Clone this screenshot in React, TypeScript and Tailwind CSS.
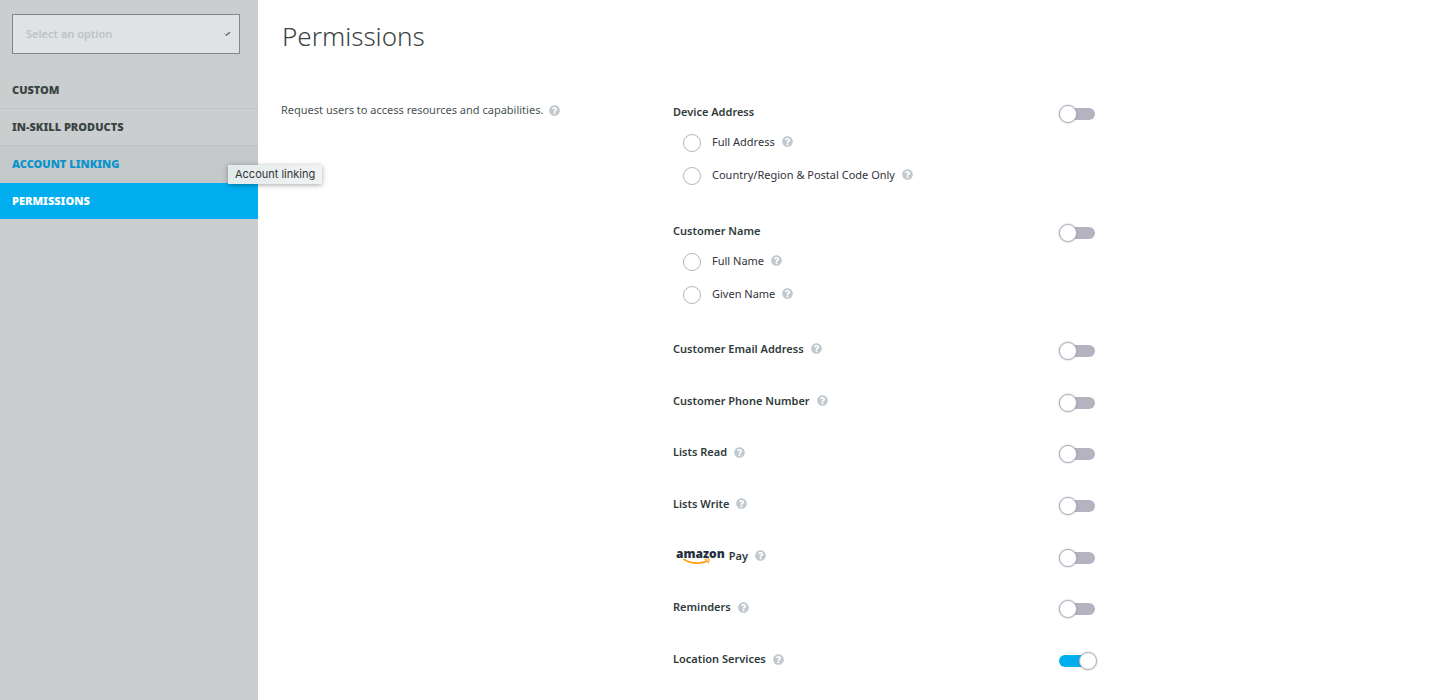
import React from "react";
import { FaQuestionCircle } from "react-icons/fa";

function Help({ topic }: { topic: string }) {
  return (
    <button type="button" aria-label={`Help: ${topic}`} className="shrink-0 text-[#c1c8ce]">
      <FaQuestionCircle className="size-[11px]" />
    </button>
  );
}

function Toggle({ id, on = false }: { id: string; on?: boolean }) {
  return (
    <span className="relative flex h-5 w-[38px] shrink-0 items-center">
      <input
        id={id}
        type="checkbox"
        role="switch"
        defaultChecked={on}
        className="peer h-3 w-9 cursor-pointer appearance-none rounded-full bg-[#b5b3c0] checked:bg-[#00aeef]"
      />
      <span className="pointer-events-none absolute left-0 size-[18px] rounded-full border border-[#b5b3c0] bg-white shadow-[0_0_2px_rgba(120,118,140,0.6)] peer-checked:left-5" />
    </span>
  );
}

function AmazonLogo() {
  return (
    <span className="relative ml-[3px] pb-1 font-['Open_Sans',sans-serif] text-[12px] leading-3 font-extrabold text-[#232f3e]">
      amazon
      <svg
        aria-hidden="true"
        viewBox="0 0 28 9"
        className="absolute top-[9px] left-[7px] h-[9px] w-7"
        fill="none"
        stroke="#ff9900"
      >
        <path d="M1 2.4C8 7.2 18 7.2 24 4" strokeWidth="1.7" strokeLinecap="round" />
        <path d="M22 2.3c1.8-.6 3.7-.7 4.1-.2.4.6-.2 2.4-1.1 3.8" strokeWidth="1.1" strokeLinecap="round" />
      </svg>
    </span>
  );
}

function PermissionHead({
  id,
  label,
  help = true,
  on,
  logo,
}: {
  id: string;
  label: string;
  help?: boolean;
  on?: boolean;
  logo?: boolean;
}) {
  return (
    <div className="flex h-6 items-center justify-between">
      <div className="flex items-center gap-[7px] pb-1">
        <label htmlFor={id} className="flex items-center gap-1 text-[11px] leading-4 font-semibold text-[#2f3b3b]">
          {logo && <AmazonLogo />}
          {label}
        </label>
        {help && <Help topic={label} />}
      </div>
      <Toggle id={id} on={on} />
    </div>
  );
}

function Option({ group, label }: { group: string; label: string }) {
  const id = `${group}-${label}`.replace(/\W+/g, "-").toLowerCase();
  return (
    <div className="flex h-[33px] items-center pl-[10px]">
      <input
        type="radio"
        id={id}
        name={group}
        className="size-[18px] shrink-0 appearance-none rounded-full border border-[#b5b3c0] bg-white checked:border-[5px] checked:border-[#00aeef]"
      />
      <div className="flex items-center gap-[7px] pb-[2px] pl-[11px]">
        <label htmlFor={id} className="text-[11px] leading-4 text-[#33323c]">
          {label}
        </label>
        <Help topic={label} />
      </div>
    </div>
  );
}

const permissions = [
  { id: "email", label: "Customer Email Address" },
  { id: "phone", label: "Customer Phone Number" },
  { id: "lists-read", label: "Lists Read" },
  { id: "lists-write", label: "Lists Write" },
  { id: "pay", label: "Pay", logo: true },
  { id: "reminders", label: "Reminders" },
  { id: "location", label: "Location Services", on: true },
];

export default function App() {
  return (
    <div className="flex min-h-screen bg-white font-['Noto_Sans','Open_Sans',sans-serif] text-[#3a4444]">
      <aside className="w-[258px] shrink-0 bg-[#cacecf]">
        <div className="relative mx-3 mt-[14px] mr-[18px]">
          <select
            aria-label="Select an option"
            defaultValue=""
            className="h-10 w-full appearance-none border border-[#7f8788] bg-[#dfe3e4] px-[13px] text-[11px] font-semibold text-[#bac4c5]"
          >
            <option value="">Select an option</option>
          </select>
          <svg
            aria-hidden="true"
            viewBox="0 0 8 6"
            className="pointer-events-none absolute top-[17px] right-[9px] h-[6px] w-2"
            fill="none"
          >
            <path d="M.8 2 3 4.2" stroke="#a3a9aa" strokeWidth="0.8" />
            <path d="M2.8 4.4 7 1.2" stroke="#545c5e" strokeWidth="1.2" />
          </svg>
        </div>
        <nav className="mt-[18px] text-[11px] leading-4 font-black">
          <a href="#custom" className="flex h-[37px] items-center border-b border-[#bfc3c4] px-3">
            CUSTOM
          </a>
          <a href="#products" className="flex h-[37px] items-center border-b border-[#bfc3c4] px-3">
            IN-SKILL PRODUCTS
          </a>
          <a
            href="#linking"
            className="relative flex h-[37px] items-center border-b border-[#c4c8c9] bg-[#c4c8c9] px-3 text-[#0a94cc]"
          >
            ACCOUNT LINKING
            <span
              role="tooltip"
              className="absolute top-[19px] left-[228px] z-10 bg-linear-to-r from-[#e2ebec] to-[#f2f2f2] px-[7px] font-['Inter',sans-serif] text-[11px] leading-[19px] font-normal whitespace-nowrap text-[#303638] shadow-[0_1px_5px_rgba(0,0,0,0.35)]"
            >
              Account linking
            </span>
          </a>
          <a href="#permissions" className="flex h-9 items-center bg-[#00aeef] px-3 text-white">
            PERMISSIONS
          </a>
        </nav>
      </aside>
      <main className="min-w-0 flex-1 pl-[23px]">
        <h1 className="pt-[18px] pl-px text-[26px] leading-9 font-light">Permissions</h1>
        <div className="mt-12 flex">
          <div className="flex w-[392px] shrink-0 items-center gap-[6px] self-start">
            <p className="text-[11px] leading-4 text-[#4a5353]">
              Request users to access resources and capabilities.
            </p>
            <Help topic="Permissions" />
          </div>
          <div className="w-[424px] shrink-0">
            <section className="mb-[29px]">
              <PermissionHead id="device-address" label="Device Address" help={false} />
              <Option group="device" label="Full Address" />
              <Option group="device" label="Country/Region &amp; Postal Code Only" />
            </section>
            <section className="mb-[14px]">
              <PermissionHead id="customer-name" label="Customer Name" help={false} />
              <Option group="name" label="Full Name" />
              <Option group="name" label="Given Name" />
            </section>
            <div className="grid h-[362px] grid-rows-7 items-center">
              {permissions.map((p) => (
                <PermissionHead key={p.id} {...p} />
              ))}
            </div>
          </div>
        </div>
      </main>
    </div>
  );
}
